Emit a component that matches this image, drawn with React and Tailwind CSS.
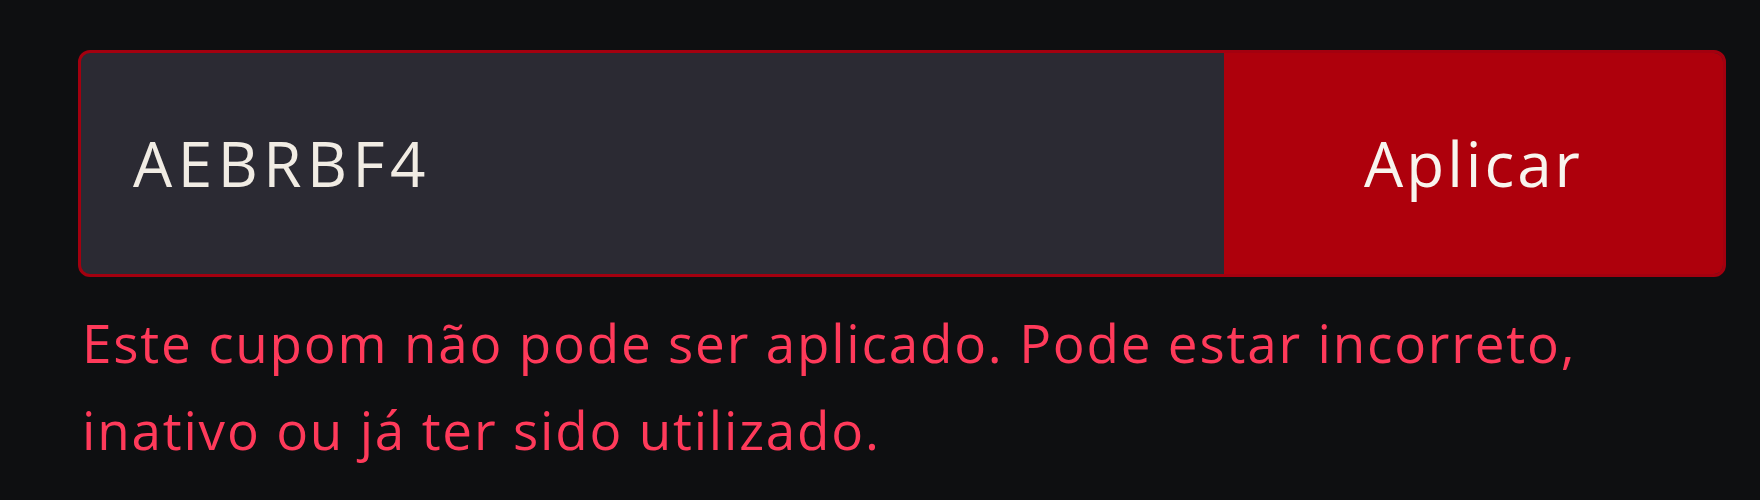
import { useState } from "react";

const App = () => {
  const [code, setCode] = useState("AEBRBF4");

  return (
    <div
      className="min-h-[500px] w-full bg-[#0e0f11] pl-[78px] pt-[50px]"
      style={{ fontFamily: "'Open Sans', 'Noto Sans', sans-serif" }}
    >
      <div className="w-[1648px]">
        <div className="flex h-[227px] overflow-hidden rounded-[12px] border-[3px] border-[#a3000f] bg-[#2b2a33]">
          <input
            value={code}
            onChange={(e) => setCode(e.target.value)}
            className="min-w-0 flex-1 bg-transparent pl-[52px] text-[62px] tracking-[5.5px] text-[#f1ece4] outline-none"
          />
          <button className="w-[499px] bg-[#ae000c] text-[62px] tracking-[3px] text-[#f8f4ee]">
            Aplicar
          </button>
        </div>
        <p className="mt-[22px] pl-[4px] text-[53px] leading-[87px] tracking-[1.8px] text-[#ff3a5a]">
          Este cupom não pode ser aplicado. Pode estar incorreto, inativo ou já
          ter sido utilizado.
        </p>
      </div>
    </div>
  );
};

export default App;
